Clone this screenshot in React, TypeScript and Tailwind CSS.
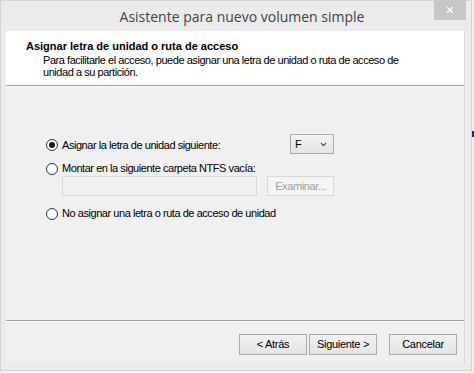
import { ChevronDown, X } from 'lucide-react'

function Radio({ checked, label }: { checked?: boolean; label: string }) {
  return (
    <div className="flex h-[13px] items-center gap-[4px]">
      <div className="flex h-[12px] w-[12px] items-center justify-center rounded-full border border-[#333] bg-white">
        {checked && <div className="h-[6px] w-[6px] rounded-full bg-[#1a1a1a]" />}
      </div>
      <span className="text-[11px] leading-[13px] tracking-[-0.45px] text-black">{label}</span>
    </div>
  )
}

function WizButton({ children }: { children: React.ReactNode }) {
  return (
    <div className="flex h-[21px] w-[68px] items-center justify-center border border-[#acacac] bg-gradient-to-b from-[#f0f0f0] to-[#e5e5e5] text-[11px] tracking-[-0.3px] text-black">
      {children}
    </div>
  )
}

export default function App() {
  return (
    <div className="flex h-[373px] w-[474px] bg-[#f3f3f3]" style={{ fontFamily: '"Liberation Sans", Arial, sans-serif' }}>
      {/* Window */}
      <div className="flex h-[371px] w-[472px] flex-col border border-[#d4d4d4] bg-[#ebebeb]">
        {/* Title bar */}
        <div className="relative flex h-[30px] shrink-0 items-center justify-center pl-[12px]">
          <span className="text-[14px] text-[#444]" style={{ fontFamily: '"Open Sans", "Noto Sans", sans-serif' }}>
            Asistente para nuevo volumen simple
          </span>
          <div className="absolute right-[5px] top-[-1px] flex h-[20px] w-[32px] items-center justify-center bg-[#c7c7c7]">
            <X className="h-[10px] w-[10px] text-white" strokeWidth={3} />
          </div>
        </div>

        {/* Client area */}
        <div className="ml-[5px] mr-[6px] flex flex-1 flex-col border-r border-[#dadada] bg-[#f0f0f0]">
          {/* Header */}
          <div className="h-[54px] shrink-0 bg-white pl-[20px] pt-[9px]">
            <p className="text-[11px] font-bold leading-[13px] text-black">Asignar letra de unidad o ruta de acceso</p>
            <p className="mt-[1px] pl-[17px] text-[11px] leading-[12px] tracking-[-0.45px] text-black">
              Para facilitarle el acceso, puede asignar una letra de unidad o ruta de acceso de
              <br />
              unidad a su partición.
            </p>
          </div>
          <div className="h-px bg-[#a0a0a0]" />
          <div className="h-px bg-white" />

          {/* Content */}
          <div className="flex flex-1 flex-col pl-[40px] pt-[47px]">
            <div className="flex h-[20px] items-center">
              <div className="w-[244px] pt-[2px]">
                <Radio checked label="Asignar la letra de unidad siguiente:" />
              </div>
              <div className="flex h-[20px] w-[44px] items-center justify-between border border-[#acacac] bg-gradient-to-b from-[#f2f2f2] to-[#e5e5e5] pl-[4px] pr-[5px]">
                <span className="text-[11px] text-black">F</span>
                <ChevronDown className="h-[9px] w-[9px] text-[#444]" strokeWidth={3} />
              </div>
            </div>
            <div className="mt-[8px]">
              <Radio label="Montar en la siguiente carpeta NTFS vacía:" />
            </div>
            <div className="mt-[1px] flex items-center pl-[16px]">
              <div className="h-[20px] w-[195px] border border-[#d9d9d9] bg-[#f0f0f0]" />
              <div className="ml-[10px] flex h-[20px] w-[67px] items-center justify-center border border-[#d9d9d9] bg-[#f4f4f4] text-[11px] tracking-[-0.4px] text-[#a0a0a0]">
                Examinar...
              </div>
            </div>
            <div className="mt-[11px]">
              <Radio label="No asignar una letra o ruta de acceso de unidad" />
            </div>
          </div>

          <div className="h-px bg-[#a0a0a0]" />
          <div className="h-px bg-white" />

          {/* Buttons */}
          <div className="flex h-[41px] shrink-0 items-start justify-end gap-[2px] pr-[7px] pt-[12px]">
            <WizButton>&lt; Atrás</WizButton>
            <WizButton>Siguiente &gt;</WizButton>
            <div className="ml-[10px]">
              <WizButton>Cancelar</WizButton>
            </div>
          </div>
        </div>
        <div className="h-[7px] shrink-0" />
      </div>

      {/* Neighbouring window edge */}
      <div className="flex flex-1 flex-col bg-[#f0f0f0]">
        <div className="mt-[131px] h-[6px] w-[2px] bg-[#1f2a6b]" />
      </div>
    </div>
  )
}
